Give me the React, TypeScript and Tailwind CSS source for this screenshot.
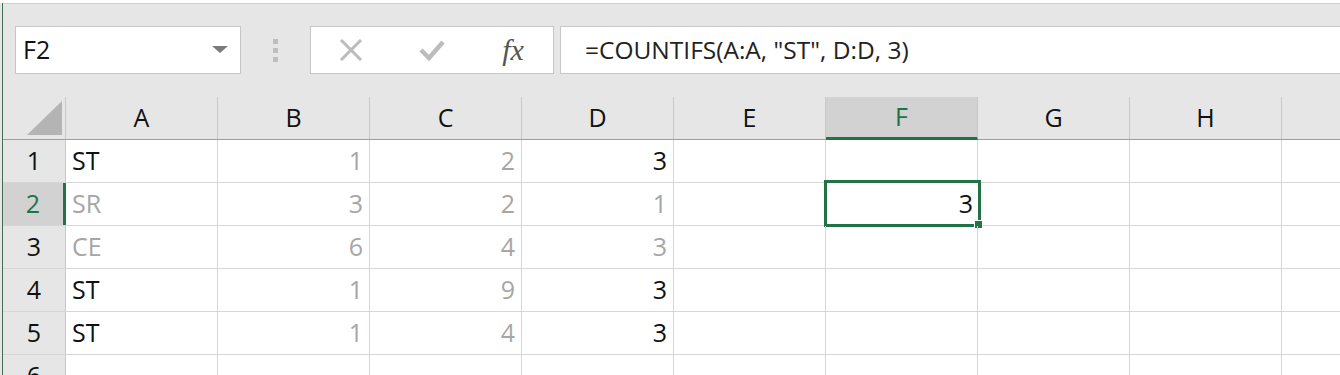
import React from 'react';

const FONT = { fontFamily: '"Open Sans", "Noto Sans", sans-serif' };

const COLS = ['A', 'B', 'C', 'D', 'E', 'F', 'G', 'H', 'I'];

type Cell = { v: string; dim?: boolean; num?: boolean };

const ROWS: Cell[][] = [
  [{ v: 'ST' }, { v: '1', dim: true, num: true }, { v: '2', dim: true, num: true }, { v: '3', num: true }],
  [{ v: 'SR', dim: true }, { v: '3', dim: true, num: true }, { v: '2', dim: true, num: true }, { v: '1', dim: true, num: true }],
  [{ v: 'CE', dim: true }, { v: '6', dim: true, num: true }, { v: '4', dim: true, num: true }, { v: '3', dim: true, num: true }],
  [{ v: 'ST' }, { v: '1', dim: true, num: true }, { v: '9', dim: true, num: true }, { v: '3', num: true }],
  [{ v: 'ST' }, { v: '1', dim: true, num: true }, { v: '4', dim: true, num: true }, { v: '3', num: true }],
  [],
];

const FormulaBar: React.FC = () => (
  <div className="h-[94px] bg-[#e6e6e6] border-t border-[#d0d0d0] flex items-start pt-[22px] pl-[12px]">
    {/* Name box */}
    <div className="w-[226px] h-[48px] bg-white border border-[#c6c6c6] flex items-center justify-between pl-[7px] pr-[12px]">
      <span className="text-[25px] text-[#111]">F2</span>
      <svg width="16" height="8" viewBox="0 0 16 8">
        <path d="M0 0 L16 0 L8 7 Z" fill="#7a7a7a" />
      </svg>
    </div>
    {/* grip dots */}
    <div className="w-[69px] flex flex-col items-center gap-[4px] pt-[13px]">
      <span className="w-[5px] h-[5px] bg-[#bdbdbd]" />
      <span className="w-[5px] h-[5px] bg-[#bdbdbd]" />
      <span className="w-[5px] h-[5px] bg-[#bdbdbd]" />
    </div>
    {/* cancel / enter / fx */}
    <div className="w-[244px] h-[48px] bg-white border border-[#c6c6c6] flex items-center">
      <div className="w-[80px] flex justify-center">
        <svg width="24" height="22" viewBox="0 0 24 22">
          <path d="M2 1 L22 21 M22 1 L2 21" stroke="#bcbcbc" strokeWidth="3" />
        </svg>
      </div>
      <div className="w-[82px] flex justify-center">
        <svg width="26" height="22" viewBox="0 0 26 22">
          <path d="M2 11 L10 19 L24 3" stroke="#bcbcbc" strokeWidth="4.5" fill="none" />
        </svg>
      </div>
      <div className="w-[80px] flex justify-center">
        <span className="text-[30px] italic text-[#555] leading-none" style={{ fontFamily: '"Liberation Serif", serif' }}>fx</span>
      </div>
    </div>
    {/* formula input */}
    <div className="flex-1 ml-[6px] h-[48px] bg-white border-y border-l border-[#c6c6c6] flex items-center pl-[24px]">
      <span className="text-[24.5px] text-[#222] whitespace-pre">=COUNTIFS(A:A, "ST", D:D, 3)</span>
    </div>
  </div>
);

const Grid: React.FC = () => (
  <div className="flex flex-col">
    {/* column headers */}
    <div className="flex h-[43px] bg-[#e6e6e6] border-b border-[#9e9e9e]">
      <div className="w-[63px] shrink-0 border-r border-[#c8c8c8] relative">
        <svg className="absolute left-[24px] top-[4px]" width="35" height="34" viewBox="0 0 35 34">
          <path d="M35 0 L35 34 L0 34 Z" fill="#b4b4b4" />
        </svg>
      </div>
      {COLS.map(c => (
        <div
          key={c}
          className={`w-[152px] shrink-0 flex items-center justify-center text-[25px] border-r border-[#c8c8c8] ${
            c === 'F' ? 'bg-[#d2d2d2] text-[#217346] border-b-[3px] border-b-[#217346] -mb-px' : 'text-[#111]'
          }`}
        >
          {c === 'I' ? '' : c}
        </div>
      ))}
    </div>
    {ROWS.map((row, ri) => {
      const sel = ri === 1;
      return (
        <div key={ri} className="flex h-[43px] border-b border-[#d6d6d6]">
          <div
            className={`w-[63px] shrink-0 flex items-center justify-center text-[25px] ${
              sel
                ? 'bg-[#d2d2d2] text-[#217346] border-r-[3px] border-[#217346]'
                : 'bg-[#e6e6e6] text-[#111] border-r border-[#c8c8c8]'
            }`}
          >
            {ri + 1}
          </div>
          {COLS.map((c, ci) => {
            const cell = row[ci];
            return (
              <div
                key={c}
                className={`w-[152px] shrink-0 border-r border-[#d6d6d6] flex items-center text-[25px] relative ${
                  cell?.num ? 'justify-end pr-[6px]' : 'justify-start pl-[6px]'
                } ${cell?.dim ? 'text-[#a6a6a6]' : 'text-[#111]'}`}
              >
                {cell?.v}
                {sel && c === 'F' && (
                  <div className="absolute left-[-2px] top-[-3px] w-[157px] h-[47px] border-[3px] border-[#217346] flex items-center justify-end pr-[5px] text-[#111] bg-white">
                    3
                    <span className="absolute right-[-5px] bottom-[-5px] w-[9px] h-[9px] bg-[#217346] border border-white" />
                  </div>
                )}
              </div>
            );
          })}
        </div>
      );
    })}
  </div>
);

export default function App() {
  return (
    <div className="w-[1340px] h-[375px] overflow-hidden bg-white" style={FONT}>
      <div className="h-[3px] bg-white" />
      <div className="flex">
        <div className="w-[3px] shrink-0 bg-[#e6e6e6] border-r border-[#3f6e55]" />
        <div className="flex-1 min-w-0 flex flex-col">
          <FormulaBar />
          <Grid />
        </div>
      </div>
    </div>
  );
}
